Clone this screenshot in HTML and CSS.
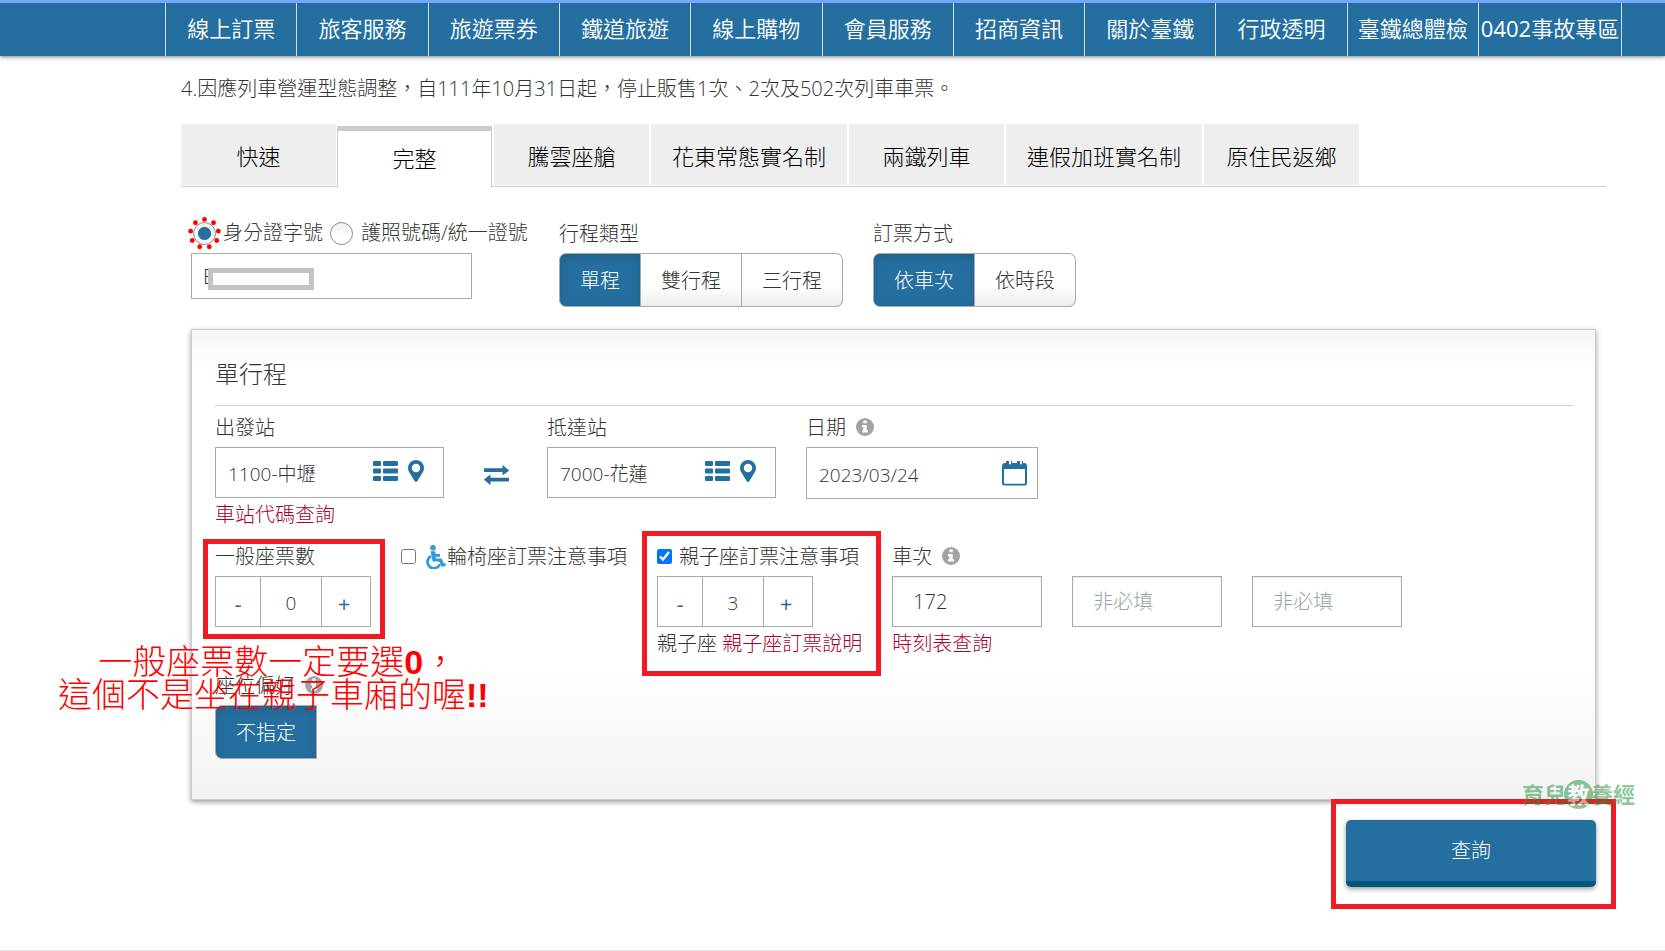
FILE: index.html
```html
<!DOCTYPE html>
<html lang="zh-Hant">
<head>
<meta charset="utf-8">
<title>線上訂票</title>
<link rel="stylesheet" href="styles.css">
</head>
<body>
<svg class="sprite" aria-hidden="true">
  <symbol id="i-list" viewBox="0 0 25 20"><path d="M0 1q0-1 1-1h6q1 0 1 1v3q0 1-1 1H1q-1 0-1-1zM10 1q0-1 1-1h13q1 0 1 1v3q0 1-1 1H11q-1 0-1-1zM0 8.500q0-1 1-1h6q1 0 1 1v3q0 1-1 1H1q-1 0-1-1zM10 8.500q0-1 1-1h13q1 0 1 1v3q0 1-1 1H11q-1 0-1-1zM0 16q0-1 1-1h6q1 0 1 1v3q0 1-1 1H1q-1 0-1-1zM10 16q0-1 1-1h13q1 0 1 1v3q0 1-1 1H11q-1 0-1-1z"/></symbol>
  <symbol id="i-pin" viewBox="0 0 16 22"><path fill-rule="evenodd" d="M8 0a8 8 0 0 1 8 8c0 1.300-.2 2.200-.7 3.200L9.300 21.200q-1.300 1.600-2.600 0L.7 11.200A7 7 0 0 1 0 8a8 8 0 0 1 8-8zm0 3.800a4.200 4.200 0 1 0 0 8.400 4.200 4.200 0 0 0 0-8.400z"/></symbol>
  <symbol id="i-swap" viewBox="0 0 25 20"><path d="M0 3.300h18.500V.3q0-.5.5 0l5.800 4.900q.4.400 0 .8L19 10q-.5.400-.5-.2V7H0zM25 12.800H6.500V9.900q0-.6-.5-.2L.2 14.300q-.4.400 0 .8L6 19.800q.5.400.5-.2v-3.200H25z"/></symbol>
  <symbol id="i-cal" viewBox="0 0 25 25"><path fill-rule="evenodd" d="M0 5q0-3 3-3h1V0h3v3.200h2V0h1v2h5V0h3v3.200h2V0h1v2h1q3 0 3 3v17.500q0 2-2 2H2q-2 0-2-2zm2 3v14q0 .7.700.7h19.600q.7 0 .7-.7V8z"/></symbol>
  <symbol id="i-info" viewBox="0 0 18 18"><circle cx="9" cy="9" r="9"/><path fill="#fff" d="M7.300 2.500h3.400v2.800H7.300zM6 7h4.700v5.200H12v2.300H6v-2.300h1.300V9.300H6z"/></symbol>
  <symbol id="i-wheel" viewBox="0 0 20 24"><circle cx="7" cy="2.800" r="2.800"/><path d="M4.600 6.300h4.600l.4 2.800H14v2.600H9.800l.3 1.800h5.700l2.100 5.200 1.500-.7.600 2.400-4 1.600-2.900-5.500H6.600z"/><path d="M5 11.200a6.400 6.400 0 1 0 8.900 8" fill="none" stroke="currentColor" stroke-width="2.800"/></symbol>
</svg>

<header class="topbar">
  <nav class="nav">
    <a href="#">線上訂票</a><a href="#">旅客服務</a><a href="#">旅遊票券</a><a href="#">鐵道旅遊</a><a href="#">線上購物</a><a href="#">會員服務</a><a href="#">招商資訊</a><a href="#">關於臺鐵</a><a href="#">行政透明</a><a href="#">臺鐵總體檢</a><a href="#"><span class="num">0402</span>事故專區</a>
  </nav>
</header>

<main class="page">
  <p class="notice">4.因應列車營運型態調整，自111年10月31日起，停止販售1次、2次及502次列車車票。</p>

  <nav class="tabs">
    <a class="tab" href="#">快速</a>
    <a class="tab tab-active" href="#">完整</a>
    <a class="tab" href="#">騰雲座艙</a>
    <a class="tab" href="#">花東常態實名制</a>
    <a class="tab" href="#">兩鐵列車</a>
    <a class="tab" href="#">連假加班實名制</a>
    <a class="tab" href="#">原住民返鄉</a>
  </nav>

  <form class="form">
    <div class="row options">
      <div class="field identity">
        <div class="label radios">
          <span class="radio-wrap">
            <input class="radio" type="radio" name="idtype" id="id-card" checked>
            <svg class="ring" viewBox="0 0 34 34"><circle cx="17" cy="17" r="14.500" pathLength="9" transform="rotate(-90 17 17)"/></svg>
          </span>
          <label class="id-label" for="id-card">身分證字號</label>
          <input class="radio" type="radio" name="idtype" id="passport">
          <label for="passport">護照號碼/統一證號</label>
        </div>
        <div class="id-box">
          <input class="box id-input" type="text" value="E" aria-label="身分證字號">
          <span class="mask"></span>
        </div>
      </div>
      <div class="field">
        <span class="label">行程類型</span>
        <div class="group">
          <button class="seg seg-on" type="button">單程</button>
          <button class="seg" type="button">雙行程</button>
          <button class="seg" type="button">三行程</button>
        </div>
      </div>
      <div class="field">
        <span class="label">訂票方式</span>
        <div class="group">
          <button class="seg seg-on" type="button">依車次</button>
          <button class="seg" type="button">依時段</button>
        </div>
      </div>
    </div>

    <section class="panel">
      <h2 class="panel-title">單行程</h2>

      <div class="row">
        <div class="field station">
          <label class="label" for="from">出發站</label>
          <div class="box combo">
            <input type="text" id="from" value="1100-中壢">
            <button class="icon-btn" type="button" aria-label="車站清單"><svg class="ico-list"><use href="#i-list"/></svg></button>
            <button class="icon-btn" type="button" aria-label="附近車站"><svg class="ico-pin"><use href="#i-pin"/></svg></button>
          </div>
          <a class="hint" href="#">車站代碼查詢</a>
        </div>
        <button class="icon-btn swap" type="button" aria-label="交換車站"><svg class="ico-swap"><use href="#i-swap"/></svg></button>
        <div class="field station">
          <label class="label" for="to">抵達站</label>
          <div class="box combo">
            <input type="text" id="to" value="7000-花蓮">
            <button class="icon-btn" type="button" aria-label="車站清單"><svg class="ico-list"><use href="#i-list"/></svg></button>
            <button class="icon-btn" type="button" aria-label="附近車站"><svg class="ico-pin"><use href="#i-pin"/></svg></button>
          </div>
        </div>
        <div class="field date">
          <label class="label" for="date">日期<svg class="ico-info"><use href="#i-info"/></svg></label>
          <div class="box combo">
            <input type="text" id="date" value="2023/03/24">
            <button class="icon-btn" type="button" aria-label="選擇日期"><svg class="ico-cal"><use href="#i-cal"/></svg></button>
          </div>
        </div>
      </div>

      <div class="row">
        <div class="field mark mark-normal">
          <label class="label" for="normal">一般座票數</label>
          <div class="box stepper">
            <button type="button">-</button>
            <input type="text" id="normal" value="0">
            <button type="button">+</button>
          </div>
        </div>
        <div class="field">
          <div class="label">
            <input class="check" type="checkbox" id="wheel"><label class="check-label" for="wheel"><svg class="ico-wheel"><use href="#i-wheel"/></svg>輪椅座訂票注意事項</label>
          </div>
        </div>
        <div class="field mark mark-child">
          <div class="label">
            <input class="check" type="checkbox" id="child" checked><label class="check-label" for="child">親子座訂票注意事項</label>
          </div>
          <div class="box stepper">
            <button type="button">-</button>
            <input type="text" aria-label="親子座票數" value="3">
            <button type="button">+</button>
          </div>
          <div class="hint-line">親子座 <a class="hint" href="#">親子座訂票說明</a></div>
        </div>
        <div class="field">
          <label class="label" for="train">車次<svg class="ico-info"><use href="#i-info"/></svg></label>
          <div class="trains">
            <input class="box train" type="text" id="train" value="172">
            <input class="box train" type="text" aria-label="車次二" placeholder="非必填">
            <input class="box train" type="text" aria-label="車次三" placeholder="非必填">
          </div>
          <a class="hint" href="#">時刻表查詢</a>
        </div>
      </div>

      <div class="row">
        <div class="field">
          <span class="label">座位偏好<svg class="ico-info"><use href="#i-info"/></svg></span>
          <div class="group">
            <button class="seg seg-on seg-only" type="button">不指定</button>
          </div>
        </div>
      </div>

      <p class="remark">&nbsp;一般座票數一定要選<b>0</b>，<br>這個不是坐在親子車廂的喔<b>!!</b></p>
      <div class="watermark"><span>育兒</span><span class="seal">教</span><span>養經</span></div>
    </section>

    <div class="actions">
      <div class="mark mark-submit"><button class="submit" type="submit">查詢</button></div>
    </div>
  </form>
</main>
</body>
</html>
```

FILE: styles.css
```css
*, *::after { box-sizing: border-box; }

body {
  margin: 0;
  min-height: 100vh;
  background: #fff;
  border-bottom: 1px solid #e4e4e4;
  color: #333;
  font: 300 20px/32px "Open Sans", "Noto Sans CJK TC", sans-serif;
}

button, input {
  margin: 0;
  font: inherit;
  color: inherit;
}

.sprite { position: absolute; width: 0; height: 0; }
svg { fill: currentColor; }

/* top navigation */
.topbar {
  padding: 0 43px 0 165px;
  border-top: 3px solid #76a9fc;
  background: #256fa0;
  box-shadow: 0 1px 4px rgba(0, 0, 0, .5);
}
.nav {
  display: grid;
  grid-template-columns: repeat(10, 1fr) 143px;
  border-right: 1px solid #d5dfe6;
}
.nav a {
  height: 53px;
  border-left: 1px solid #d5dfe6;
  color: #fff;
  font-size: 22px;
  font-weight: 350;
  line-height: 50px;
  text-align: center;
  text-decoration: none;
  white-space: nowrap;
}
.num { font-weight: 400; }

.page { padding: 0 59px 0 181px; }

.notice { margin: 0; padding: 17px 0 19px; }

/* tabs */
.tabs {
  display: flex;
  gap: 2px;
  height: 63px;
  border-bottom: 1px solid #ccc;
}
.tab {
  min-width: 155px;
  height: 61px;
  padding: 0 21px;
  background: #eee;
  color: #000;
  font-size: 22px;
  line-height: 64px;
  text-align: center;
  text-decoration: none;
}
.tab-active {
  height: 61px;
  margin: 2px 0 0 -1px;
  border: 1px solid #ccc;
  border-top-width: 5px;
  border-bottom: 0;
  background: #fff;
  line-height: 54px;
}

/* form */
.form { padding: 30px 10px 0; }
.row { display: flex; gap: 30px; }
.field { display: flex; flex-direction: column; align-items: flex-start; }
.label {
  display: flex;
  align-items: center;
  height: 32px;
  margin-bottom: 4px;
  line-height: 32px;
  white-space: nowrap;
}
.label:not(.radios) { padding-top: 1px; }
.options { padding-bottom: 22px; }
.identity { width: 338px; }

.radios { padding-left: 2px; }
.radio {
  appearance: none;
  display: block;
  flex: none;
  width: 23px;
  height: 23px;
  border: 1px solid #8b8b93;
  border-radius: 50%;
  background: linear-gradient(#eee, #fff 60%);
}
.radio:checked { background: radial-gradient(circle, #256fa0 6px, #f3f3f3 7px); }
.radio + label { padding-left: 8px; }
.radio-wrap { position: relative; }
.ring {
  position: absolute;
  inset: -5px;
  width: 33px;
  height: 33px;
  fill: none;
  stroke: #f00;
  stroke-width: 5;
  stroke-linecap: round;
  stroke-dasharray: 0 1;
}
.id-label { padding: 0 7px; }

.box {
  height: 51px;
  border: 1px solid #aaa;
  border-radius: 0;
  background: #fff;
}
.id-box { position: relative; }
.id-input { display: block; width: 281px; height: 46px; padding: 0 11px; }
.mask {
  position: absolute;
  left: 17px;
  top: 15px;
  width: 106px;
  height: 22px;
  border: 5px solid #c3c3c3;
  background: #fff;
}

.group { display: flex; }
.seg {
  height: 54px;
  padding: 2px 20px 0;
  border: 1px solid #aaa;
  background: linear-gradient(#fff 60%, #ececec);
}
.seg + .seg { border-left: 0; }
.seg:first-child { border-radius: 7px 0 0 7px; }
.seg:last-child { border-radius: 0 7px 7px 0; }
.seg-on {
  background: #256fa0;
  box-shadow: inset 0 3px 8px rgba(0, 0, 0, .15);
  color: #fff;
}
.group .seg-only { border-radius: 7px 0 0 7px; }

/* trip panel */
.panel {
  position: relative;
  display: flex;
  flex-direction: column;
  gap: 8px;
  padding: 0 22px 40px 23px;
  border: 1px solid #ccc;
  background: linear-gradient(#f5f5f5, #fff 36px, #fff calc(100% - 130px), #f2f2f2);
  box-shadow: 0 2px 5px rgba(0, 0, 0, .4);
}
.panel-title {
  margin: 0 0 -3px;
  padding: 26px 0 13px;
  border-bottom: 1px solid #ccc;
  font-size: 24px;
  font-weight: 300;
  line-height: 36px;
}

.station { width: 229px; }
.date { width: 232px; }
.combo {
  display: flex;
  align-items: center;
  gap: 10px;
  width: 100%;
  padding: 0 19px 0 12px;
  font-size: 19px;
}
.combo input {
  flex: 1;
  min-width: 0;
  padding: 3px 0 0;
  border: 0;
  outline: 0;
  background: none;
}
.icon-btn {
  display: flex;
  padding: 0 0 4px;
  border: 0;
  background: none;
  color: #256fa0;
}
.date .combo { height: 52px; padding-right: 10px; }
.date .icon-btn { padding: 0; }
.ico-list { width: 25px; height: 20px; }
.ico-pin { width: 16px; height: 22px; }
.ico-swap { width: 25px; height: 20px; }
.ico-cal { width: 25px; height: 25px; }
.ico-info { width: 18px; height: 18px; margin: 0 0 2px 10px; color: #a0a4a6; }
.ico-wheel { width: 20px; height: 24px; margin-right: 1px; color: #3498db; }
.swap { margin: 54px 8px 0 10px; }

.hint { color: #a8002c; line-height: 34px; text-decoration: none; }
.hint-line { line-height: 34px; white-space: nowrap; }

.stepper { display: flex; width: 156px; font-size: 19px; }
.stepper button {
  width: 44px;
  padding: 2px 0 0;
  border: 0;
  background: none;
  color: #256fa0;
  font-size: 22px;
  font-weight: 400;
}
.stepper input {
  width: 62px;
  padding: 3px 0 0;
  border: 1px solid #aaa;
  border-width: 0 1px;
  background: none;
  text-align: center;
}

.check { width: 15px; height: 15px; margin-right: 7px; }
.check-label { display: flex; align-items: center; }
.check:not(:checked) + .check-label { padding-left: 3px; }

.trains { display: flex; gap: 30px; }
.train { width: 150px; padding: 0 20px; box-shadow: inset 0 1px 2px rgba(0, 0, 0, .1); }
.train::placeholder { color: #95a5a6; }

/* highlights and notes laid over the form */
.mark { position: relative; }
.mark::after {
  content: "";
  position: absolute;
  border: 5px solid #ed1c24;
  pointer-events: none;
}
.mark-normal::after { left: -12px; top: -1px; width: 182px; height: 100px; }
.mark-child::after { inset: -9px -19px -15px -15px; }
.mark-submit::after { inset: -21px -20px -22px -15px; }

.remark {
  position: absolute;
  left: -134px;
  top: 315px;
  margin: 0;
  color: #f00;
  font-size: 34px;
  line-height: 32px;
  text-align: center;
  white-space: nowrap;
}
.remark b { font-family: "Liberation Sans", sans-serif; font-weight: 700; }

.watermark {
  position: absolute;
  right: -40px;
  bottom: -10px;
  z-index: 1;
  display: flex;
  align-items: center;
  color: #1e8c3c;
  font-size: 22px;
  font-weight: 700;
  line-height: 29px;
  opacity: .5;
}
.seal {
  width: 29px;
  margin: 0 -2px;
  border-radius: 50%;
  background: #1e8c3c;
  color: #fff;
  text-align: center;
}

.actions { display: flex; justify-content: flex-end; padding: 20px 0 46px; }
.submit {
  display: block;
  width: 250px;
  height: 67px;
  padding: 0;
  border: 0;
  border-bottom: 6px solid #00567b;
  border-radius: 5px;
  background: #256fa0;
  box-shadow: 0 2px 5px rgba(0, 0, 0, .4);
  color: #fff;
}
```
